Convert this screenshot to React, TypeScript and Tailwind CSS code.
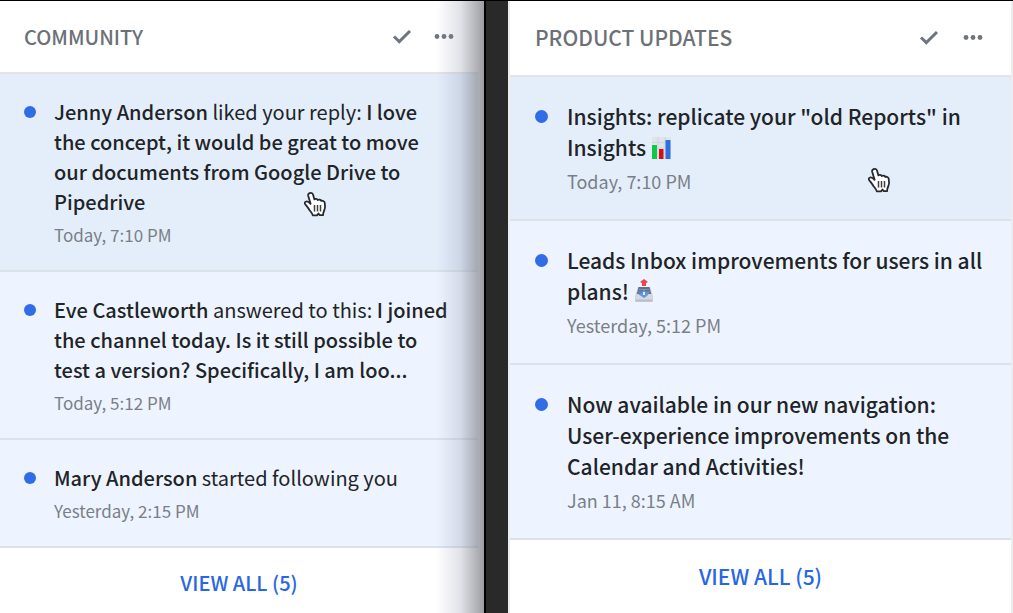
import type { ReactNode } from 'react';

type Size = 'md' | 'lg';

function Check() {
  return (
    <svg width="20" height="18" viewBox="0 0 20 18" fill="none" stroke="#6f757d" strokeWidth="3" aria-hidden="true">
      <path d="M2 8.5 7.3 13.6 18 3" />
    </svg>
  );
}

function Dots() {
  return (
    <svg width="20" height="18" viewBox="0 0 20 18" fill="#6f757d" aria-hidden="true">
      <circle cx="3" cy="8.5" r="2.4" />
      <circle cx="10" cy="8.5" r="2.4" />
      <circle cx="17" cy="8.5" r="2.4" />
    </svg>
  );
}

function Hand() {
  return (
    <svg width="26" height="28" viewBox="0 0 26 28" aria-hidden="true">
      <path
        d="M7.2 2c1.5-.4 2.5.4 2.9 1.8l1.3 4.6c.9-.8 2.7-.7 3.4.6 1.1-.7 2.8-.3 3.4.9 1.3-.5 3.2.2 3.5 1.8.5 2.5.6 5.2-.3 7.3-.9 1.8-1.3 3-1.4 5.2h-3.2l-1.3-1.7-1.5 1.9H9.8c-.6-2.4-1.8-3.4-3.2-5.2-1.4-1.9-2.3-3.9-4.1-5.6-1.2-1.2-.8-2.7.5-3.1 1.5-.5 2.8.4 4.6 2.3L5.1 4.5C4.8 3.3 5.9 2.3 7.2 2Z"
        fill="#fff" stroke="#25282d" strokeWidth="1.8" strokeLinejoin="round"
      />
      <path d="M11.5 14v6.5M14.5 14v6.5M17.5 14v6.5" stroke="#3c4046" strokeWidth="1.5" />
    </svg>
  );
}

function ChartEmoji() {
  return (
    <svg className="inline-block align-[-4px]" width="21" height="24" viewBox="0 0 21 24" role="img" aria-label="bar chart">
      <path d="M1 1h19v22H1z" fill="#dfe3ea" />
      <path d="M1 6.5h19M1 12h19M1 17.5h19M7 1v22M14 1v22" stroke="#cfd5de" />
      <path d="M1 9h5v14H1z" fill="#0fc944" />
      <path d="M8 13h4.5v10H8z" fill="#d50d18" />
      <path d="M14.500 4h5v19h-5z" fill="#2f6fe0" />
    </svg>
  );
}

function OutboxEmoji() {
  return (
    <svg className="inline-block align-[-3px]" width="20" height="24" viewBox="0 0 20 24" role="img" aria-label="outbox tray">
      <path d="M4 8h12l3 9v6H1v-6Z" fill="#ccd2da" />
      <path d="M4.5 8h11l2 8h-15Z" fill="#60738d" />
      <path d="M5 10.5h10M4 13h12" stroke="#8293aa" />
      <path d="M2 15h4l2 3h4l2-3h4v7H2Z" fill="#d5d9de" />
      <path d="m10 10 1 3 4 1-2 3-3 2-3-2-3-2 4-1Z" fill="#5b9bef" />
      <path d="M10 13v3" stroke="#dfeafa" strokeWidth="2" />
      <path d="M2 21.5h16" stroke="#b9bec6" strokeWidth="2" />
      <path d="m10 0 4 3-2 1v3H8V4L6 3Z" fill="#f0444b" />
    </svg>
  );
}

function Header({ title, size }: { title: string; size: Size }) {
  return (
    <header className={`flex items-center justify-between border-b-2 border-[#e2e4e9] ${size === 'md' ? 'h-[73px] px-6' : 'h-[76px] pl-[25px] pr-7'}`}>
      <h2 className={`font-medium text-[#6c7178] ${size === 'md' ? 'text-[20px]' : 'text-[21px]'}`}>{title}</h2>
      <div className={`flex ${size === 'md' ? 'gap-[22px]' : 'gap-6'}`}>
        <button type="button" aria-label="Mark all as read"><Check /></button>
        <button type="button" aria-label="More options"><Dots /></button>
      </div>
    </header>
  );
}

function Item({ children, time, size, active, pointer }: { children: ReactNode; time: string; size: Size; active?: boolean; pointer?: ReactNode }) {
  return (
    <li className={`relative flex border-b-2 border-[#dce2ea] ${active ? 'bg-[#e4eefb]' : 'bg-[#eef4ff]'} ${size === 'md' ? 'gap-[18px] pl-6 pt-[23px] pb-5' : 'gap-[19px] pl-[25px] pt-6 pb-[22px]'}`}>
      <span className={`flex shrink-0 items-center ${size === 'md' ? 'h-[30px]' : 'h-[31px]'}`}>
        <span className={`rounded-full bg-[#2f6ce5] ${size === 'md' ? 'size-3' : 'size-[13px]'}`} />
      </span>
      <div className="whitespace-nowrap">
        <p className={`text-[#212427] ${size === 'md' ? 'text-[20px] leading-[30px]' : 'text-[21px] leading-[31px] font-medium'}`}>{children}</p>
        <time className={`block pt-[3px] text-[#7a7f86] ${size === 'md' ? 'text-[17px] leading-[30px]' : 'text-[18px] leading-[31px]'}`}>{time}</time>
      </div>
      {pointer}
    </li>
  );
}

function ViewAll({ size }: { size: Size }) {
  return (
    <footer className={`flex justify-center ${size === 'md' ? 'pt-5' : 'pt-[21px]'}`}>
      <a href="#all" className={`font-medium text-[#2867e3] ${size === 'md' ? 'text-[20px] leading-[30px]' : 'text-[21px] leading-[31px]'}`}>VIEW ALL (5)</a>
    </footer>
  );
}

const B = ({ children }: { children: ReactNode }) => <strong className="font-medium">{children}</strong>;

export default function App() {
  return (
    <main className="flex min-h-screen border-t border-black bg-[#292929] font-['Noto_Sans_CJK_SC',sans-serif]">
      <section className="relative flex-[478] overflow-hidden bg-white pr-[6px]">
        <Header title="COMMUNITY" size="md" />
        <ul>
          <Item
            size="md" time="Today, 7:10 PM" active
            pointer={<span className="absolute left-[303px] top-[117px]"><Hand /></span>}
          >
            <B>Jenny Anderson</B> liked your reply: <B>I love<br />the concept, it would be great to move<br />our documents from Google Drive to<br />Pipedrive</B>
          </Item>
          <Item size="md" time="Today, 5:12 PM">
            <B>Eve Castleworth</B> answered to this: <B>I joined<br />the channel today. Is it still possible to<br />test a version? Specifically, I am loo...</B>
          </Item>
          <Item size="md" time="Yesterday, 2:15 PM">
            <B>Mary Anderson</B> started following you
          </Item>
        </ul>
        <ViewAll size="md" />
        <div className="pointer-events-none absolute inset-y-0 right-0 w-12 bg-linear-to-r from-[#8990a800] via-[#8990a840] to-[#808389c8]" />
      </section>
      <div className="w-6 border-l-2 border-black bg-[#292929]" />
      <section className="flex-[501] border-x-2 border-[#ededee] bg-white">
        <Header title="PRODUCT UPDATES" size="lg" />
        <ul>
          <Item
            size="lg" time="Today, 7:10 PM" active
            pointer={<span className="absolute left-[357px] top-[90px]"><Hand /></span>}
          >
            Insights: replicate your "old Reports" in<br />Insights <ChartEmoji />
          </Item>
          <Item size="lg" time="Yesterday, 5:12 PM">
            Leads Inbox improvements for users in all<br />plans! <OutboxEmoji />
          </Item>
          <Item size="lg" time="Jan 11, 8:15 AM">
            Now available in our new navigation:<br />User-experience improvements on the<br />Calendar and Activities!
          </Item>
        </ul>
        <ViewAll size="lg" />
      </section>
    </main>
  );
}
